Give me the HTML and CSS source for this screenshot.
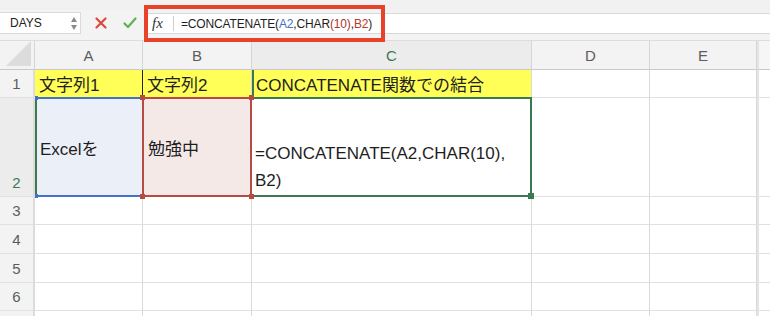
FILE: index.html
```html
<!DOCTYPE html>
<html lang="ja">
<head>
<meta charset="utf-8">
<title>Excel CONCATENATE</title>
<link rel="stylesheet" href="styles.css">
</head>
<body>
<div class="app">
  <div class="toolstrip"></div>
  <div class="fbar">
    <div class="namebox">
      <span class="name">DAYS</span>
      <span class="spin"><i class="up"></i><i class="down"></i></span>
    </div>
    <div class="actions">
      <svg class="x" width="12" height="12" viewBox="0 0 12 12"><path d="M1.5 1.5L10.5 10.5M10.5 1.5L1.5 10.5" stroke="#e0483d" stroke-width="2.2" stroke-linecap="round"/></svg>
      <svg class="ok" width="14" height="12" viewBox="0 0 14 12"><path d="M1.5 6.5L5 10L12.5 1.5" stroke="#5db24f" stroke-width="2.2" fill="none" stroke-linecap="round" stroke-linejoin="round"/></svg>
    </div>
    <div class="formula">
      <span class="fx">fx</span>
      <span class="sep"></span>
      <span class="ftext">=CONCATENATE(<span class="ref-a">A2</span>,CHAR<span class="paren">(10)</span>,<span class="ref-b">B2</span>)</span>
    </div>
    <div class="callout"></div>
  </div>
  <div class="sheet">
    <div class="hd corner"><span class="tri"></span></div>
    <div class="hd col">A</div>
    <div class="hd col">B</div>
    <div class="hd col sel">C</div>
    <div class="hd col">D</div>
    <div class="hd col">E</div>
    <div class="hd edge"></div>

    <div class="rh">1</div>
    <div class="c yel a1">文字列1</div>
    <div class="c yel b1">文字列2</div>
    <div class="c yel c1">CONCATENATE関数での結合</div>
    <div class="c"></div>
    <div class="c"></div>
    <div class="c edge"></div>

    <div class="rh sel r2">2</div>
    <div class="c a2 mid">Excelを<i class="hdl h-a-tl"></i><i class="hdl h-a-bl"></i></div>
    <div class="c b2 mid">勉強中<i class="hdl h-tl"></i><i class="hdl h-tr"></i><i class="hdl h-bl"></i><i class="hdl h-br"></i></div>
    <div class="c c2">=CONCATENATE(A2,CHAR(10),<br>B2)<i class="hdl h-g"></i></div>
    <div class="c"></div>
    <div class="c"></div>
    <div class="c edge"></div>

    <div class="rh">3</div><div class="c"></div><div class="c"></div><div class="c"></div><div class="c"></div><div class="c"></div><div class="c edge"></div>
    <div class="rh">4</div><div class="c"></div><div class="c"></div><div class="c"></div><div class="c"></div><div class="c"></div><div class="c edge"></div>
    <div class="rh">5</div><div class="c"></div><div class="c"></div><div class="c"></div><div class="c"></div><div class="c"></div><div class="c edge"></div>
    <div class="rh">6</div><div class="c"></div><div class="c"></div><div class="c"></div><div class="c"></div><div class="c"></div><div class="c edge"></div>
    <div class="rh"></div><div class="c"></div><div class="c"></div><div class="c"></div><div class="c"></div><div class="c"></div><div class="c edge"></div>
  </div>
</div>
</body>
</html>
```

FILE: styles.css
```css
* { box-sizing: border-box; }
html, body { margin: 0; padding: 0; }
body {
  width: 770px;
  height: 316px;
  overflow: hidden;
  background: #ffffff;
  font-family: "Liberation Sans", "Noto Sans CJK JP", sans-serif;
  color: #1e1e1e;
}
.app { position: relative; }

.toolstrip {
  height: 10px;
  background: #f1f1f1;
}

.fbar {
  position: relative;
  height: 31px;
  display: flex;
  align-items: flex-start;
  background: #f3f3f3;
  border-bottom: 1px solid #dcdcdc;
}
.namebox {
  margin-top: 2px;
  width: 81px;
  height: 22px;
  background: #fff;
  border: 1px solid #dadada;
  border-left: none;
  display: flex;
  align-items: center;
  justify-content: space-between;
  padding: 0 3px 0 10px;
}
.name { font-size: 12px; color: #222; }
.spin {
  display: flex;
  flex-direction: column;
  gap: 3px;
}
.spin i {
  display: block;
  width: 0; height: 0;
  border-left: 3px solid transparent;
  border-right: 3px solid transparent;
}
.spin .up { border-bottom: 5px solid #8a8a8a; }
.spin .down { border-top: 5px solid #8a8a8a; }

.actions {
  width: 63px;
  height: 26px;
  display: flex;
  align-items: center;
  padding-left: 14px;
  gap: 16px;
}

.formula {
  flex: 1;
  margin-top: 3px;
  height: 21px;
  background: #fff;
  border-top: 1px solid #d8d8d8;
  border-bottom: 1px solid #d8d8d8;
  display: flex;
  align-items: center;
  padding-left: 8px;
}
.fx {
  font-family: "Liberation Serif", "DejaVu Serif", serif;
  font-style: italic;
  font-size: 15px;
  color: #333;
  width: 14px;
}
.sep {
  width: 1px;
  height: 15px;
  background: #cfcfcf;
  margin-left: 7px;
  margin-right: 7px;
}
.ftext { font-size: 12px; color: #1e1e1e; letter-spacing: -0.15px; }
.ref-a { color: #3e70c8; }
.paren { color: #a8332a; }
.ref-b { color: #c0392b; }

.callout {
  position: absolute;
  left: 144px;
  top: -5px;
  width: 241px;
  height: 37px;
  border: 4px solid #e8432a;
  pointer-events: none;
}

.sheet {
  display: grid;
  grid-template-columns: 35px 108px 109px 280px 118px 107px 1fr;
  grid-template-rows: 29px 28px 99px 28px 29px 29px 28px 28px;
}

.hd {
  background: #f3f3f3;
  border-right: 1px solid #d6d6d6;
  border-bottom: 1px solid #c9c9c9;
  display: flex;
  align-items: center;
  justify-content: center;
  font-size: 15px;
  color: #5c5c5c;
}
.hd.sel { color: #3b7a50; background: #ececec; }
.corner { position: relative; }
.corner .tri {
  position: absolute;
  right: 3px;
  bottom: 3px;
  width: 25px;
  height: 25px;
  background: #dcdcdc;
  clip-path: polygon(100% 0, 100% 100%, 0 100%);
}

.rh {
  background: #f3f3f3;
  border-right: 2px solid #dcdcdc;
  border-bottom: 1px solid #e0e0e0;
  display: flex;
  align-items: center;
  justify-content: center;
  font-size: 15px;
  color: #5c5c5c;
}
.rh.r2 {
  align-items: flex-end;
  padding-bottom: 5px;
  color: #3b7a50;
  background: #ececec;
}

.c {
  position: relative;
  border-right: 1px solid #d9d9d9;
  border-bottom: 1px solid #e0e0e0;
  font-size: 17px;
  display: flex;
  align-items: center;
  padding-left: 4px;
  white-space: nowrap;
}
.edge {
  border-left: 2px solid #e4e4e4;
  border-right: none;
  background: #fff;
}
.hd.edge { background: #f6f6f6; }

.yel { background: #ffff57; }
.a1 { border-right: 1px solid #222; }
.c1 { border-left: 2px solid #3b7a50; padding-left: 2px; }

.mid { align-items: center; }

.a2 {
  background: #ebf0f8;
  border-top: 2px solid #4472c4;
  border-bottom: 2px solid #4472c4;
  border-left: 2px solid #3b7a50;
  border-right: none;
  margin-top: -1px;
  padding-left: 3px;
}
.b2 {
  background: #f5e9e8;
  border: 2px solid #b84a44;
  margin-top: -1px;
  margin-left: -1px;
  padding-left: 4px;
}
.c2 {
  border: 2px solid #3b7a50;
  border-left: none;
  margin-top: -1px;
  align-items: flex-end;
  line-height: 27px;
  padding-left: 3px;
  padding-bottom: 1px;
  white-space: normal;
}

.hdl {
  position: absolute;
  width: 5px;
  height: 5px;
  background: #b84a44;
  z-index: 2;
}
.h-tl { left: -4px; top: -4px; }
.h-tr { right: -4px; top: -4px; }
.h-bl { left: -4px; bottom: -4px; }
.h-br { right: -4px; bottom: -4px; }
.h-a-tl, .h-a-bl { background: #4472c4; width: 3px; height: 4px; left: -2px; }
.h-a-tl { top: -3px; }
.h-a-bl { bottom: -3px; }
.h-g { background: #3b7a50; right: -4px; bottom: -4px; width: 6px; height: 6px; }
```
